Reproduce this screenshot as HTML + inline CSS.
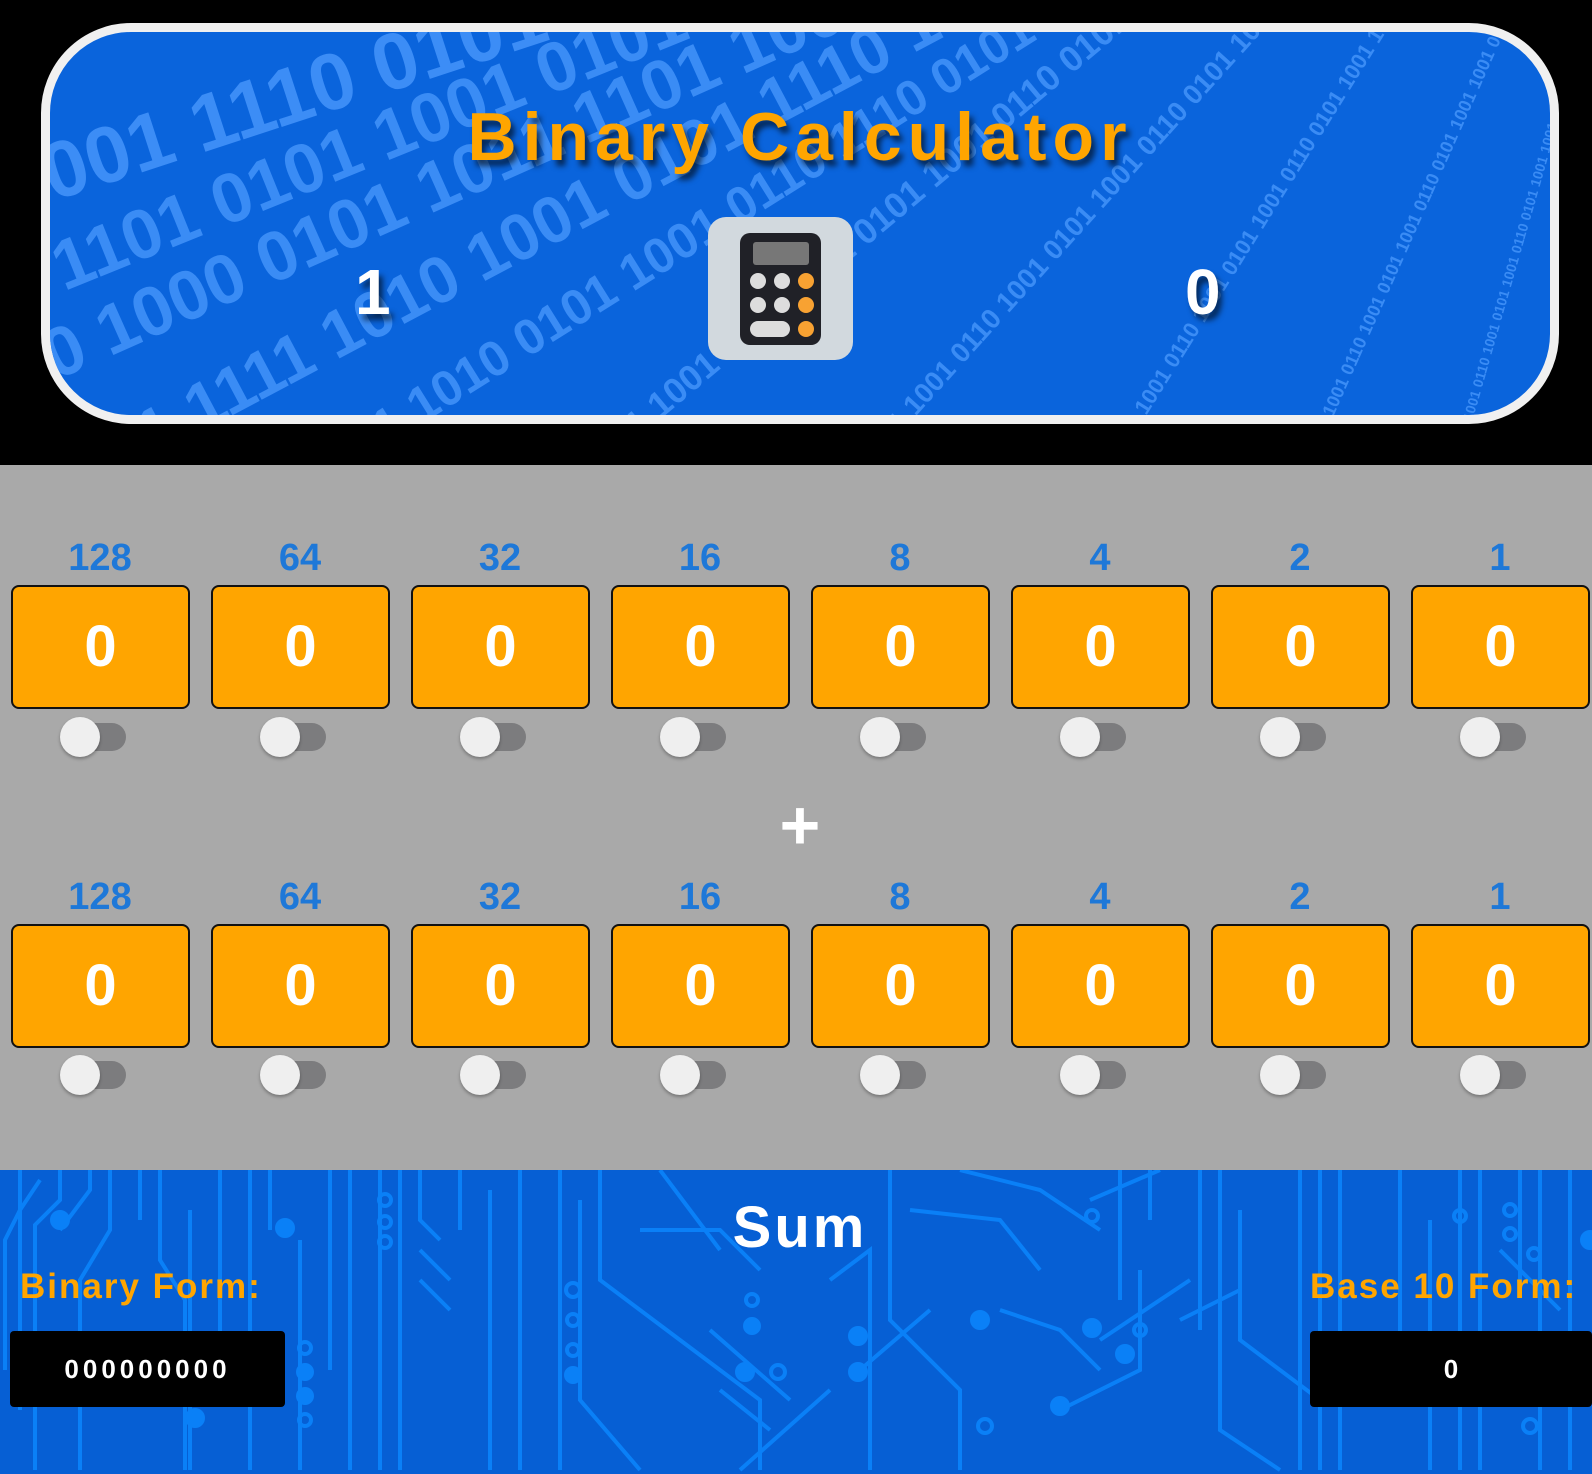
<!DOCTYPE html>
<html><head><style>
*{margin:0;padding:0;box-sizing:border-box}
body{width:1592px;height:1474px;background:#000;position:relative;overflow:hidden;font-family:"Liberation Sans",sans-serif}
.hdr{position:absolute;left:41px;top:23px;width:1518px;height:401px;border:9px solid #f0f0f0;border-radius:90px;background:#0a64dc;overflow:hidden}
.bin{position:absolute;color:#3a8cf5;font-weight:bold;white-space:nowrap;transform-origin:left top}
.title{position:absolute;left:0;width:100%;top:66px;text-align:center;color:#ffa500;font-size:68px;font-weight:bold;letter-spacing:6px;text-shadow:4px 6px 6px rgba(0,0,0,.6)}
.dig{position:absolute;color:#fff;font-size:64px;font-weight:bold;text-shadow:4px 6px 6px rgba(0,0,0,.6)}
.calc{position:absolute;left:708px;top:217px;width:145px;height:143px;background:#d2d9de;border-radius:18px}
.gray{position:absolute;left:0;top:465px;width:1592px;height:705px;background:#a9a9a9}
.lbl{position:absolute;width:178px;text-align:center;color:#1e78d8;font-size:38px;font-weight:bold}
.box{position:absolute;width:179px;height:124px;background:#ffa500;border:2px solid #111;border-radius:8px;color:#fff;font-size:58px;font-weight:bold;text-align:center;line-height:120px}
.trk{position:absolute;width:48px;height:28px;background:#7c7c7e;border-radius:14px}
.knob{position:absolute;width:40px;height:40px;background:#efefef;border-radius:50%;box-shadow:0 2px 3px rgba(0,0,0,.3)}
.plus{position:absolute;left:770px;top:785px;width:60px;text-align:center;color:#fff;font-size:70px;font-weight:bold}
.sum{position:absolute;left:0;top:1170px;width:1592px;height:304px;background:#065fd4;overflow:hidden}
.st{position:absolute;color:#ffa500;font-size:35px;font-weight:bold;letter-spacing:2px}
.out{position:absolute;background:#000;border-radius:4px;color:#fff;font-size:26px;font-weight:bold;text-align:center;line-height:76px;height:76px}
</style></head><body>
<div class="hdr">
<div class="bin" style="left:-20px;top:100px;font-size:80px;transform:rotate(-18deg);color:#3c8df6">001 1110 0101 1000 0101 1001</div>
<div class="bin" style="left:-10px;top:200px;font-size:70px;transform:rotate(-22deg)">1101 0101 1001 0101 1101 1001 0101</div>
<div class="bin" style="left:-20px;top:290px;font-size:70px;transform:rotate(-24deg)">0 1000 0101 1011 1101 1001 1001 1100</div>
<div class="bin" style="left:40px;top:390px;font-size:66px;transform:rotate(-28deg)">01 1111 1010 1001 0101 1110 1001 1001</div>
<div class="bin" style="left:240px;top:420px;font-size:50px;transform:rotate(-32deg)">0101 1010 0101 1001 0110 1110 0101 1001 0110</div>
<div class="bin" style="left:520px;top:420px;font-size:36px;transform:rotate(-40deg)">0101 1001 0110 1001 0101 1001 0110 0101 1001 1001</div>
<div class="bin" style="left:800px;top:420px;font-size:28px;transform:rotate(-48deg)">0101 1001 0110 1001 0101 1001 0110 0101 1001 1001 0101</div>
<div class="bin" style="left:1050px;top:420px;font-size:22px;transform:rotate(-58deg)">0101 1001 0110 1001 0101 1001 0110 0101 1001 1001 0101 1001</div>
<div class="bin" style="left:1250px;top:420px;font-size:18px;transform:rotate(-66deg)">0101 1001 0110 1001 0101 1001 0110 0101 1001 1001 0101 1001</div>
<div class="bin" style="left:1400px;top:420px;font-size:14px;transform:rotate(-74deg)">0101 1001 0110 1001 0101 1001 0110 0101 1001 1001 0101 1001 0101</div>
<div class="title">Binary Calculator</div>
<div class="dig" style="left:305px;top:223px">1</div>
<div class="dig" style="left:1135px;top:223px">0</div>
</div>
<div class="calc"><svg width="145" height="143" viewBox="0 0 145 143">
<rect x="32" y="16" width="81" height="112" rx="10" fill="#202127"/>
<rect x="45" y="25" width="56" height="23" rx="3" fill="#777"/>
<g fill="#ddd"><circle cx="50" cy="64" r="8"/><circle cx="74" cy="64" r="8"/><circle cx="50" cy="88" r="8"/><circle cx="74" cy="88" r="8"/><rect x="42" y="104" width="40" height="16" rx="8"/></g>
<g fill="#f8a232"><circle cx="98" cy="64" r="8"/><circle cx="98" cy="88" r="8"/><circle cx="98" cy="112" r="8"/></g></svg></div>
<div class="gray"></div>
<div id="rows"></div>
<div class="plus">+</div>
<div class="sum">
<svg width="1592" height="304" style="position:absolute;left:0;top:0" fill="none" stroke="#0a80f7" stroke-width="4">
<path d="M20 0V40L5 70V200M40 10L20 40V240M60 0V30L35 55V300M90 0V20L60 60M110 0V60L80 110V300M140 0V50M160 0V90L185 130V300M190 40V300M220 0V180M250 0V300M270 0V60M300 70V300M330 0V200M350 0V300"/>
<path d="M380 0V300M400 0V300M420 0V50L440 70M420 80L450 110M420 110L450 140M460 0V60M490 20V300M520 0V300M560 0V300"/>
<path d="M580 30V230L640 300M600 0V110L680 170M640 60L720 60L760 100M660 0L720 80M680 170L760 230V300M710 160L790 230M720 220L770 260M740 300L830 220M830 110L870 80V300M860 200L930 140"/>
<path d="M890 0V150L960 220V300M910 40L1000 50L1040 100M960 0L1040 20L1100 60M1000 140L1060 160L1100 200M1060 240L1140 200V100M1090 30L1160 0M1100 170L1190 110M1120 0V130M1150 0V50M1180 150L1240 120M1200 0V160"/>
<path d="M1220 0V260L1280 300M1240 40V170L1320 230M1300 0V300M1320 0V300M1340 0V300M1400 0V190M1430 50V300M1460 0V300M1480 0V300M1500 80L1560 140M1520 0V120M1540 0V300M1570 0V300"/>
<circle cx="60" cy="50" r="8" fill="#0a80f7"/><circle cx="285" cy="58" r="8" fill="#0a80f7"/><circle cx="385" cy="30" r="6"/><circle cx="385" cy="52" r="6"/><circle cx="385" cy="72" r="6"/><circle cx="305" cy="178" r="6"/><circle cx="305" cy="202" r="7" fill="#0a80f7"/><circle cx="305" cy="226" r="7" fill="#0a80f7"/><circle cx="305" cy="250" r="6"/><circle cx="195" cy="248" r="8" fill="#0a80f7"/>
<circle cx="573" cy="120" r="7"/><circle cx="573" cy="150" r="6"/><circle cx="573" cy="180" r="6"/><circle cx="573" cy="205" r="7" fill="#0a80f7"/><circle cx="752" cy="130" r="6"/><circle cx="752" cy="156" r="7" fill="#0a80f7"/><circle cx="858" cy="166" r="8" fill="#0a80f7"/><circle cx="858" cy="202" r="8" fill="#0a80f7"/><circle cx="980" cy="150" r="8" fill="#0a80f7"/><circle cx="1092" cy="46" r="6"/><circle cx="1092" cy="158" r="8" fill="#0a80f7"/><circle cx="1140" cy="160" r="6"/><circle cx="1125" cy="184" r="8" fill="#0a80f7"/><circle cx="745" cy="202" r="8" fill="#0a80f7"/><circle cx="778" cy="202" r="7"/><circle cx="1060" cy="236" r="8" fill="#0a80f7"/><circle cx="1510" cy="40" r="6"/><circle cx="1510" cy="64" r="6"/><circle cx="1534" cy="84" r="6"/><circle cx="1460" cy="46" r="6"/><circle cx="1590" cy="70" r="8" fill="#0a80f7"/><circle cx="985" cy="256" r="7"/><circle cx="1530" cy="256" r="7"/>
</svg>
<div style="position:absolute;left:0;width:1600px;top:24px;text-align:center;color:#fff;font-size:58px;font-weight:bold;letter-spacing:3px">Sum</div>
<div class="st" style="left:20px;top:97px">Binary Form:</div>
<div class="st" style="left:1310px;top:97px">Base 10 Form:</div>
<div class="out" style="left:10px;top:161px;width:275px;letter-spacing:4px">000000000</div>
<div class="out" style="left:1310px;top:161px;width:282px">0</div>
</div>
<script>
var h='',v=[128,64,32,16,8,4,2,1],ys=[[560,585,737],[899,924,1075]];
ys.forEach(function(r){for(var i=0;i<8;i++){var x=11+i*200;
h+='<div class="lbl" style="left:'+x+'px;top:'+(r[0]-23)+'px">'+v[i]+'</div>';
h+='<div class="box" style="left:'+x+'px;top:'+r[1]+'px">0</div>';
h+='<div class="trk" style="left:'+(x+67)+'px;top:'+(r[2]-14)+'px"></div>';
h+='<div class="knob" style="left:'+(x+49)+'px;top:'+(r[2]-20)+'px"></div>';}});
document.getElementById('rows').innerHTML=h;
</script>
</body></html>
